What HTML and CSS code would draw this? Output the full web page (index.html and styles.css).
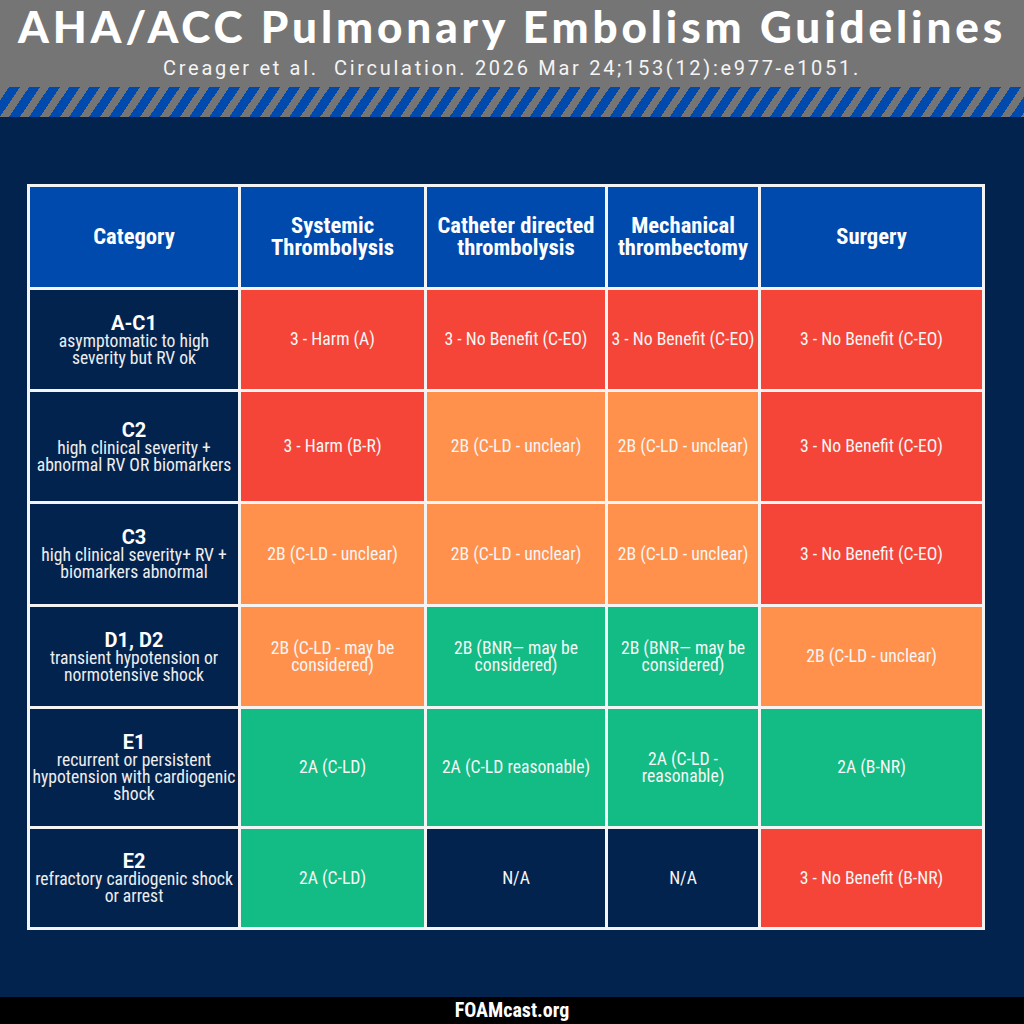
FILE: index.html
```html
<!DOCTYPE html>
<html lang="en">
<head>
<meta charset="utf-8">
<title>AHA/ACC Pulmonary Embolism Guidelines</title>
<link rel="stylesheet" href="styles.css">
</head>
<body>
<header class="top">
  <h1 class="title">AHA/ACC Pulmonary Embolism Guidelines</h1>
  <p class="cite">Creager et al.&nbsp; Circulation. 2026 Mar 24;153(12):e977-e1051.</p>
</header>
<div class="stripes"></div>
<main class="stage">
  <div class="grid">
    <div class="cell head">Category</div>
    <div class="cell head">Systemic<br>Thrombolysis</div>
    <div class="cell head">Catheter directed<br>thrombolysis</div>
    <div class="cell head">Mechanical<br>thrombectomy</div>
    <div class="cell head">Surgery</div>

    <div class="cell cat"><span class="lbl">A-C1</span><span class="desc">asymptomatic to high<br>severity but RV ok</span></div>
    <div class="cell red">3 - Harm (A)</div>
    <div class="cell red">3 - No Benefit (C-EO)</div>
    <div class="cell red">3 - No Benefit (C-EO)</div>
    <div class="cell red">3 - No Benefit (C-EO)</div>

    <div class="cell cat"><span class="lbl">C2</span><span class="desc">high clinical severity +<br>abnormal RV OR biomarkers</span></div>
    <div class="cell red">3 - Harm (B-R)</div>
    <div class="cell orange">2B (C-LD - unclear)</div>
    <div class="cell orange">2B (C-LD - unclear)</div>
    <div class="cell red">3 - No Benefit (C-EO)</div>

    <div class="cell cat"><span class="lbl">C3</span><span class="desc">high clinical severity+ RV +<br>biomarkers abnormal</span></div>
    <div class="cell orange">2B (C-LD - unclear)</div>
    <div class="cell orange">2B (C-LD - unclear)</div>
    <div class="cell orange">2B (C-LD - unclear)</div>
    <div class="cell red">3 - No Benefit (C-EO)</div>

    <div class="cell cat"><span class="lbl">D1, D2</span><span class="desc">transient hypotension or<br>normotensive shock</span></div>
    <div class="cell orange">2B (C-LD - may be<br>considered)</div>
    <div class="cell green">2B (BNR— may be<br>considered)</div>
    <div class="cell green">2B (BNR— may be<br>considered)</div>
    <div class="cell orange">2B (C-LD - unclear)</div>

    <div class="cell cat"><span class="lbl">E1</span><span class="desc">recurrent or persistent<br>hypotension with cardiogenic<br>shock</span></div>
    <div class="cell green">2A (C-LD)</div>
    <div class="cell green">2A (C-LD reasonable)</div>
    <div class="cell green">2A (C-LD -<br>reasonable)</div>
    <div class="cell green">2A (B-NR)</div>

    <div class="cell cat"><span class="lbl">E2</span><span class="desc">refractory cardiogenic shock<br>or arrest</span></div>
    <div class="cell green">2A (C-LD)</div>
    <div class="cell navy">N/A</div>
    <div class="cell navy">N/A</div>
    <div class="cell red">3 - No Benefit (B-NR)</div>
  </div>
</main>
<footer class="foot">FOAMcast.org</footer>
</body>
</html>
```
FILE: styles.css
```css
* { box-sizing: border-box; }
html, body { margin: 0; padding: 0; }
body {
  width: 1024px;
  height: 1024px;
  overflow: hidden;
  background: #03234f;
  font-family: "Roboto Condensed", Roboto, "Liberation Sans", sans-serif;
  color: #fff;
}
.top {
  height: 87px;
  background: #757575;
  text-align: center;
  padding-top: 4px;
}
.title {
  margin: 0;
  font-family: Lato, "Open Sans", sans-serif;
  font-weight: 900;
  font-size: 44px;
  line-height: 44px;
  letter-spacing: 3.9px;
  color: #fff;
}
.cite {
  margin: 10px 0 0;
  font-family: Roboto, sans-serif;
  font-size: 20px;
  line-height: 20px;
  letter-spacing: 2.7px;
  color: #f4f4f4;
}
.stripes {
  height: 30px;
  background: repeating-linear-gradient(124deg, #757575 0 7.6px, #0049ad 7.6px 16.6px);
}
.stage {
  height: 880px;
  padding: 67px 0 0 27px;
}
.grid {
  display: grid;
  width: fit-content;
  grid-template-columns: 208px 183px 178px 150px 221px;
  grid-template-rows: 100px 99px 109px 100px 99px 117px 98px;
  gap: 3px;
  padding: 3px;
  background: #f4f4f4;
}
.cell {
  display: flex;
  flex-direction: column;
  align-items: center;
  justify-content: center;
  text-align: center;
  font-stretch: 87.5%;
  font-size: 17.7px;
  line-height: 17px;
  color: #f6f6f6;
}
.head {
  background: #004aad;
  font-weight: 700;
  font-size: 22.6px;
  line-height: 22px;
  color: #fff;
}
.cat { background: #03234f; }
.lbl {
  font-family: Roboto, sans-serif;
  font-stretch: 100%;
  font-weight: 700;
  font-size: 20px;
  line-height: 20px;
  color: #fff;
}
.desc {
  font-size: 17.6px;
  line-height: 17px;
  color: #eeeeee;
}
.red { background: #f44538; }
.orange { background: #ff914d; }
.green { background: #12bc84; }
.navy { background: #03234f; }
.foot {
  height: 27px;
  background: #000;
  text-align: center;
  font-weight: 700;
  font-size: 20px;
  line-height: 27px;
  font-stretch: 87.5%;
  color: #fff;
}
```
